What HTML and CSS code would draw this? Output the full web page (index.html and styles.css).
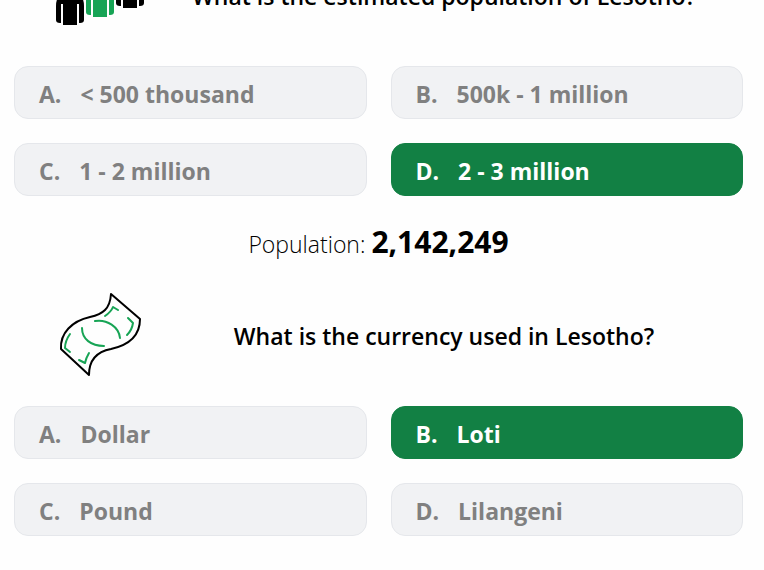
FILE: index.html
```html
<!DOCTYPE html>
<html lang="en">
<head>
<meta charset="utf-8">
<meta name="viewport" content="width=device-width, initial-scale=1">
<title>Lesotho quiz</title>
<link rel="stylesheet" href="styles.css">
</head>
<body>
<main class="quiz">
  <section class="question">
    <header class="question-head">
      <svg class="icon" viewBox="0 0 90 90" aria-hidden="true">
        <defs>
          <g id="person">
            <circle cx="15" cy="30" r="7"/>
            <path d="M1 55Q1 44 9 44H21Q29 44 29 55V69Q29 72 25 72H24V53H22V74H8V53H6V72H5Q1 72 1 69Z"/>
          </g>
        </defs>
        <use href="#person"/>
        <use href="#person" x="30" y="-8" fill="#17a455"/>
        <use href="#person" x="60" y="-17"/>
      </svg>
      <h2 class="title">What is the estimated population of Lesotho?</h2>
    </header>
    <div class="answers">
      <button class="answer" type="button"><span class="letter">A.</span>&lt; 500 thousand</button>
      <button class="answer" type="button"><span class="letter">B.</span>500k - 1 million</button>
      <button class="answer" type="button"><span class="letter">C.</span>1 - 2 million</button>
      <button class="answer correct" type="button"><span class="letter">D.</span>2 - 3 million</button>
    </div>
    <p class="result">Population: <strong class="figure">2,142,249</strong></p>
  </section>
  <section class="question">
    <header class="question-head">
      <svg class="icon" viewBox="0 0 90 90" fill="none" stroke-width="2" stroke-linecap="round" stroke-linejoin="round" aria-hidden="true">
        <path stroke="#000" d="M56 3L85 28C85 45 74 54 56 58C40 61 34 70 34 84L6 58C5 42 17 30 35 26C48 23 55 18 56 3Z"/>
        <path stroke="#17a455" d="M40 30C52 28 64 36 65 47M27 37C27 48 36 55 49 55M50 25Q56 21 58 16L63 19M73 27L78 32Q77 39 72 44M15 43Q10 50 10 57L15 61M24 69L30 72Q31 67 34 62"/>
      </svg>
      <h2 class="title">What is the currency used in Lesotho?</h2>
    </header>
    <div class="answers">
      <button class="answer" type="button"><span class="letter">A.</span>Dollar</button>
      <button class="answer correct" type="button"><span class="letter">B.</span>Loti</button>
      <button class="answer" type="button"><span class="letter">C.</span>Pound</button>
      <button class="answer" type="button"><span class="letter">D.</span>Lilangeni</button>
    </div>
  </section>
</main>
</body>
</html>
```
FILE: styles.css
```css
* {
  box-sizing: border-box;
}

body {
  margin: 0;
  background: #fefefe;
  color: #000;
  font-family: "Open Sans", "Noto Sans", sans-serif;
  font-size: 23px;
}

/* The list is scrolled part of the way past the first heading. */
.quiz {
  margin-top: -74px;
  padding: 0 21px 0 14px;
}

.question-head {
  display: flex;
  align-items: center;
  height: 140px;
  padding-left: 41px;
}

.icon {
  flex: none;
  width: 90px;
  height: 90px;
}

.title {
  flex: 1;
  margin: 0;
  font-size: 23px;
  font-weight: 650;
  line-height: 32px;
  text-align: center;
}

.answers {
  display: grid;
  grid-template-columns: 1fr 1fr;
  gap: 24px;
}

.answer {
  height: 53px;
  padding: 2px 24px 0;
  border: 1px solid #e5e7eb;
  border-radius: 14px;
  background: #f1f2f4;
  color: #808080;
  font: inherit;
  font-weight: 700;
  line-height: 32px;
  text-align: left;
}

.answer.correct {
  border-color: #128044;
  background: #128044;
  color: #fff;
}

.letter {
  margin-right: 19px;
}

.result {
  height: 70px;
  margin: 0;
  padding-top: 23px;
  font-weight: 300;
  line-height: 46px;
  text-align: center;
}

.figure {
  font-size: 30px;
  font-weight: 700;
}
```
